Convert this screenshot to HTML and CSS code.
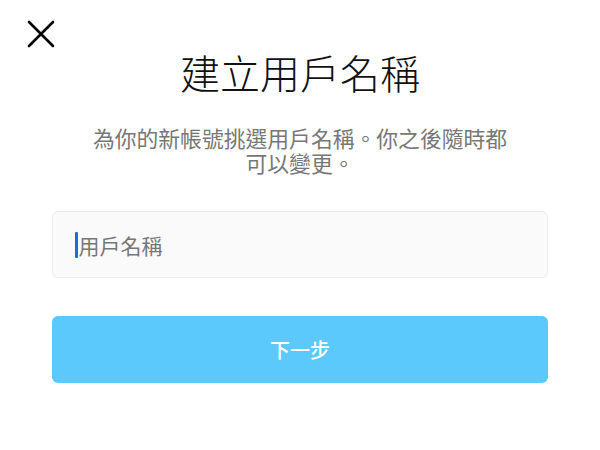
FILE: index.html
```html
<!DOCTYPE html>
<html lang="zh-Hant">
<head>
<meta charset="utf-8">
<title>建立用戶名稱</title>
<link rel="stylesheet" href="styles.css">
</head>
<body>
<div class="page">
  <div class="topbar">
    <svg class="close" viewBox="0 0 28 28" width="28" height="28" aria-label="關閉">
      <path d="M2 2 L26 26 M26 2 L2 26" stroke="#000" stroke-width="2.6" stroke-linecap="round" fill="none"/>
    </svg>
  </div>
  <h1 class="title">建立用戶名稱</h1>
  <p class="subtitle">為你的新帳號挑選用戶名稱。你之後隨時都可以變更。</p>
  <div class="field">
    <span class="caret"></span><span class="placeholder">用戶名稱</span>
  </div>
  <div class="button">下一步</div>
</div>
</body>
</html>
```
FILE: styles.css
```css
html, body {
  margin: 0;
  padding: 0;
  background: #fff;
}
body {
  font-family: "Noto Sans CJK TC", "Noto Sans", sans-serif;
}
.page {
  width: 600px;
  height: 450px;
  display: flex;
  flex-direction: column;
  align-items: center;
  box-sizing: border-box;
}
.topbar {
  align-self: stretch;
  height: 48px;
  box-sizing: border-box;
  padding: 20px 0 0 27px;
}
.close {
  display: block;
}
.title {
  margin: 0;
  font-size: 40px;
  line-height: 48px;
  font-weight: 300;
  color: #111;
  letter-spacing: 0;
}
.subtitle {
  margin: 29px 0 0;
  max-width: 430px;
  text-align: center;
  font-size: 21.8px;
  line-height: 25px;
  color: #777;
  font-weight: 400;
}
.field {
  margin-top: 36px;
  width: 496px;
  height: 67px;
  box-sizing: border-box;
  background: #fafafa;
  border: 1px solid #ececec;
  border-radius: 6px;
  display: flex;
  align-items: center;
  padding-left: 22px;
}
.caret {
  width: 2.5px;
  height: 26px;
  background: #1e6be0;
  border-radius: 1px;
  margin-right: 1px;
}
.placeholder {
  font-size: 21px;
  color: #777;
}
.button {
  margin-top: 38px;
  width: 496px;
  height: 67px;
  background: #5bc9fb;
  border-radius: 6px;
  display: flex;
  align-items: center;
  justify-content: center;
  color: #fff;
  font-size: 20px;
  font-weight: 500;
}
```
